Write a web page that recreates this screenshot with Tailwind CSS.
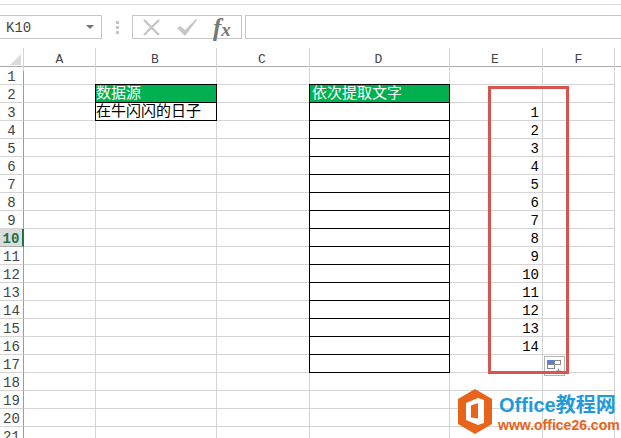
<!DOCTYPE html>
<html lang="zh-CN">
<head>
  <meta charset="UTF-8"/>
  <meta name="viewport" content="width=device-width, initial-scale=1.0"/>
  <title>Excel</title>
  <script src="https://cdn.jsdelivr.net/npm/@tailwindcss/browser@4"></script>
</head>
<body class="bg-white overflow-hidden font-['Liberation_Mono','Noto_Sans_CJK_SC',monospace]">
  <div class="relative w-[621px] h-[438px] overflow-hidden">

    <!-- ribbon edge -->
    <div class="h-[15px] pt-1"><div class="h-px bg-[#dcdcdc]"></div></div>

    <!-- formula bar -->
    <div class="flex items-stretch h-6">
      <div class="w-[102px] h-6 border border-l-0 border-[#c6c6c6] flex items-center justify-between pl-[6px] pr-[7px] text-[14px] text-[#444]">
        <span class="pt-[3px]">K10</span>
        <svg width="8" height="4" viewBox="0 0 8 4"><path d="M0 0h8L4 4z" fill="#777"/></svg>
      </div>
      <div class="w-[30px] flex items-center justify-center">
        <div class="flex flex-col gap-[2px]">
          <span class="w-[3px] h-[3px] bg-[#c4c4c4]"></span>
          <span class="w-[3px] h-[3px] bg-[#c4c4c4]"></span>
          <span class="w-[3px] h-[3px] bg-[#c4c4c4]"></span>
        </div>
      </div>
      <div class="w-[110px] h-6 border border-[#c6c6c6] flex items-center pl-[10px]">
        <svg width="17" height="17" viewBox="0 0 17 17" fill="none" stroke="#c6c6c6" stroke-width="2.4"><path d="M1 1l15 15M16 1L1 16"/></svg>
        <svg class="ml-[17px]" width="20" height="17" viewBox="0 0 20 17"><path d="M0 9l3-2 5 4L19 0l1 1L8 17z" fill="#c6c6c6"/></svg>
        <span class="ml-[16px] font-['Liberation_Serif',serif] italic font-bold leading-none text-[#777] whitespace-nowrap"><span class="text-[25px]">f</span><span class="text-[19px]">x</span></span>
      </div>
      <div class="ml-[3px] flex-1 h-6 border border-r-0 border-[#c6c6c6]"></div>
    </div>

    <!-- sheet -->
    <div id="sheet" class="mt-[9px]">
      <div class="grid grid-cols-[24px_72px_121px_93px_140px_93px_72px_6px] h-[19px] border-b border-[#ababab] text-[13px] text-[#444] text-center leading-[23px]">
        <div class="relative border-r border-[#d4d4d4]">
          <svg class="absolute left-[10px] top-[6px]" width="11" height="11" viewBox="0 0 11 11"><path d="M11 0v11H0z" fill="#dcdcdc"/></svg>
        </div>
        <div class="border-r border-[#d4d4d4]">A</div>
        <div class="border-r border-[#d4d4d4] pr-[2px]">B</div>
        <div class="border-r border-[#d4d4d4] pr-[2px]">C</div>
        <div class="border-r border-[#d4d4d4] pr-[2px]">D</div>
        <div class="border-r border-[#d4d4d4] pr-[2px]">E</div>
        <div class="border-r border-[#d4d4d4]">F</div>
      </div>
      <div id="rows"></div>
    </div>

    <!-- paste options -->
    <div class="absolute left-[544px] top-[356px] w-[21px] h-5 bg-white border border-[#b4b4b4] flex items-start justify-center pt-[3px]">
      <svg width="15" height="14" viewBox="0 0 15 14"><rect x="0.5" y="0.5" width="7" height="4" fill="#5b7fd6" stroke="#5b7fd6"/><rect x="7.5" y="0.5" width="6" height="4" fill="#fff" stroke="#8a8a8a"/><rect x="0.5" y="4.5" width="7" height="4" fill="#fff" stroke="#8a8a8a"/><path d="M9 11h5M11.5 8.500v5" stroke="#8a8a8a"/></svg>
    </div>

    <!-- red selection box -->
    <div class="absolute left-[488px] top-[86px] w-[81px] h-[288px] border-[3px] border-[#d9534f]"></div>

    <!-- watermark -->
    <div class="absolute left-[458px] top-[389px] w-[163px] h-[49px] flex items-start gap-[7px]">
      <svg class="shrink-0" width="34" height="45" viewBox="0 0 34 45">
        <path d="M17 0l17 10v25L17 45 0 35V10z" fill="#e8641b"/>
        <path d="M20 9L8 14v17l12 5 6-2V11z" fill="#fff"/>
        <path d="M20 14l-7 2.500v12l7 1z" fill="#e8641b"/>
      </svg>
      <div class="font-['Liberation_Sans','Noto_Sans_CJK_SC',sans-serif] font-bold">
        <div class="text-[20px] leading-[24px] mt-1 text-[#1f9bdc] whitespace-nowrap">Office教程网</div>
        <div class="text-[14px] leading-[16px] -ml-px text-[#e8641b] whitespace-nowrap">www.office26.com</div>
      </div>
    </div>
  </div>

  <script>
    const COLS = "grid grid-cols-[24px_72px_121px_93px_140px_93px_72px_6px] h-[18px]";
    const GRID = "border-r border-b border-[#d4d4d4]";
    const CJK = "text-[15px] leading-[20px]";
    const BOXED = "border-r border-b border-l border-black -ml-px";
    const TOPBOX = "border border-black -ml-px -mt-px bg-[#00b050] text-white";
    const rows = document.getElementById("rows");

    function cell(cls, text) {
      return `<div class="${cls} overflow-hidden whitespace-nowrap">${text}</div>`;
    }

    for (let r = 1; r <= 21; r++) {
      const active = r === 10;
      const num = r >= 3 && r <= 16 ? r - 2 : "";
      let b = cell(GRID, ""), d = cell(GRID, "");

      if (r === 2) {
        b = cell(`${TOPBOX} ${CJK}`, "数据源");
        d = cell(`${TOPBOX} ${CJK} pl-[2px]`, "依次提取文字");
      } else if (r === 3) {
        b = cell(`${BOXED} ${CJK} text-black`, "在牛闪闪的日子");
      }
      if (r >= 3 && r <= 17) d = cell(BOXED, "");

      const head = active
        ? "bg-[#dcdcdc] text-[#217346] font-bold border-r-2 border-r-[#217346] border-b border-b-[#ababab]"
        : "text-[#444] border-r border-r-[#9c9c9c] border-b border-b-[#d4d4d4]";

      rows.insertAdjacentHTML("beforeend", `
        <div class="${COLS} text-[14px] leading-[21px]">
          ${cell(head + " text-center", r)}
          ${cell(GRID, "")}
          ${b}
          ${cell(GRID, "")}
          ${d}
          ${cell(GRID + " text-right text-black pr-[3px]", num)}
          ${cell(GRID, "")}
        </div>`);
    }
  </script>
</body>
</html>
